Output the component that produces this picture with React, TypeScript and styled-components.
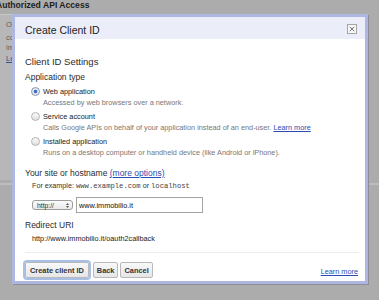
import React from "react";
import styled, { createGlobalStyle } from "styled-components";

const GlobalStyle = createGlobalStyle`
  body {
    margin: 0;
    background: #acacac;
    font-family: "Liberation Sans", Arial, sans-serif;
  }
`;

const Page = styled.div`
  position: relative;
  width: 379px;
  height: 300px;
  overflow: hidden;
  background: #acacac;
`;

const PageHeading = styled.h2`
  margin: 0 0 0 -4px;
  height: 14px;
  font-size: 8.6px;
  line-height: 11px;
  font-weight: bold;
  color: #1e1e1e;
  white-space: nowrap;
`;

const BackPanel = styled.div`
  width: 270px;
  height: 166px;
  box-sizing: border-box;
  padding: 5px 0 0 6px;
  background: #b7b7b7;
  border-top: 1px solid #c6c6c6;
  border-right: 1px solid #c6c6c6;
`;

const BackLine = styled.div<{ $link?: boolean; $gap?: number }>`
  font-size: 7.6px;
  line-height: 10.5px;
  margin-top: ${p => p.$gap ?? 0}px;
  color: ${p => (p.$link ? "#3b4f8c" : "#5c5c5c")};
  text-decoration: ${p => (p.$link ? "underline" : "none")};
  white-space: nowrap;
`;

const BackRule = styled.div`
  margin-top: 3px;
  height: 2px;
  background: #bdbdbd;
`;

const Dialog = styled.div`
  position: absolute;
  left: 12px;
  top: 14px;
  width: 356px;
  height: 270px;
  box-sizing: border-box;
  border: 3px solid #aeb7e1;
  box-shadow: 1px 1px 0 #8c8c98;
  background: #fff;
  display: flex;
  flex-direction: column;
`;

const TitleBar = styled.div`
  height: 21px;
  display: flex;
  align-items: center;
  justify-content: space-between;
  padding: 1px 8px 0 10px;
  background: #ebeef8;
`;

const Title = styled.div`
  font-size: 10.5px;
  color: #222;
  margin-top: 2px;
`;

const CloseBox = styled.div`
  width: 8px;
  height: 8px;
  border: 1px solid #a6a6a6;
  background: #f6f6f6;
  display: flex;
  align-items: center;
  justify-content: center;
`;

const Body = styled.div`
  flex: 1;
  display: flex;
  flex-direction: column;
  padding: 17px 6px 0 10px;
`;

const SectionTitle = styled.div`
  font-size: 9.5px;
  line-height: 12px;
  color: #2a2a2a;
`;

const Label = styled.div<{ $gap: number }>`
  font-size: 8.5px;
  line-height: 11px;
  color: #2a2a2a;
  margin-top: ${p => p.$gap}px;
  white-space: nowrap;
`;

const Options = styled.div`
  display: flex;
  flex-direction: column;
  gap: 3px;
  margin-top: 3px;
`;

const Option = styled.div`
  display: grid;
  grid-template-columns: 9px 1fr;
  column-gap: 3px;
  padding-left: 6px;
  align-items: center;
`;

const Radio = styled.span<{ $checked?: boolean }>`
  width: 9px;
  height: 9px;
  box-sizing: border-box;
  border-radius: 50%;
  border: 1px solid ${p => (p.$checked ? "#8d96a8" : "#b3b3b3")};
  background: ${p =>
    p.$checked
      ? "radial-gradient(circle, #2f62c0 0, #4a7ad0 1.6px, #e6ecf6 2.2px, #d9dfe9 100%)"
      : "linear-gradient(#fdfdfd, #dedede)"};
`;

const OptionName = styled.div`
  font-size: 7.3px;
  line-height: 11px;
  color: #222;
  white-space: nowrap;
`;

const OptionDesc = styled.div`
  grid-column: 2;
  font-size: 7.3px;
  line-height: 11px;
  color: #777;
  white-space: nowrap;
`;

const Link = styled.a`
  color: #2a4bb0;
  text-decoration: underline;
`;

const Example = styled.div`
  margin-top: 1px;
  padding-left: 7px;
  font-size: 7.2px;
  line-height: 11px;
  color: #333;
  white-space: nowrap;
`;

const Mono = styled.span`
  font-family: "Liberation Mono", "Courier New", monospace;
  color: #444;
`;

const HostRow = styled.div`
  margin-top: 5px;
  padding-left: 7px;
  display: flex;
  align-items: center;
  gap: 3px;
`;

const SelectBox = styled.div`
  width: 41px;
  height: 10px;
  box-sizing: border-box;
  border: 1px solid #9c9c9c;
  border-radius: 3px;
  background: linear-gradient(#fbfbfb, #e9e9e9);
  display: flex;
  align-items: center;
  justify-content: space-between;
  padding: 0 3px 0 4px;
  font-size: 6.8px;
  color: #333;
`;

const HostInput = styled.div`
  width: 127px;
  height: 16px;
  box-sizing: border-box;
  border: 1px solid #a3a3a3;
  padding-left: 2px;
  display: flex;
  align-items: center;
  font-size: 7.3px;
  color: #111;
`;

const UriText = styled.div`
  margin-top: 2px;
  padding-left: 7px;
  font-size: 7.3px;
  line-height: 11px;
  color: #222;
`;

const Separator = styled.div`
  margin-top: 8px;
  height: 1px;
  background: #ececec;
`;

const Footer = styled.div`
  margin-top: 9px;
  display: flex;
  align-items: center;
  gap: 2px;
`;

const Button = styled.button<{ $primary?: boolean }>`
  height: 16px;
  box-sizing: border-box;
  padding: 0 ${p => (p.$primary ? 4 : 3)}px;
  margin: 0;
  border: 1px solid #b9b9b9;
  border-radius: 2px;
  background: linear-gradient(#f8f8f8, #e6e6e6);
  font-family: "Liberation Sans", Arial, sans-serif;
  font-size: 7.4px;
  font-weight: bold;
  color: #333;
  box-shadow: ${p => (p.$primary ? "0 0 0 2px #a8c0e8" : "none")};
  margin-right: ${p => (p.$primary ? 2 : 0)}px;
`;

const FooterLink = styled(Link)`
  margin-left: auto;
  margin-top: 2px;
  margin-right: 1px;
  font-size: 7.3px;
`;

const SelectArrows = () => (
  <svg width="3" height="7" viewBox="0 0 3 7">
    <path d="M0 3 L1.5 1 L3 3 Z M0 4 L1.5 6 L3 4 Z" fill="#555" />
  </svg>
);

const CloseIcon = () => (
  <svg width="6" height="6" viewBox="0 0 6 6">
    <path d="M0.8 0.8 L5.2 5.2 M5.2 0.8 L0.8 5.2" stroke="#777" strokeWidth="1" />
  </svg>
);

export default function App() {
  return (
    <Page>
      <GlobalStyle />
      <PageHeading>Authorized API Access</PageHeading>
      <BackPanel>
        <BackLine>O</BackLine>
        <BackLine $gap={2}>co</BackLine>
        <BackLine>im</BackLine>
        <BackLine $link>Le</BackLine>
      </BackPanel>
      <BackRule />

      <Dialog>
        <TitleBar>
          <Title>Create Client ID</Title>
          <CloseBox>
            <CloseIcon />
          </CloseBox>
        </TitleBar>
        <Body>
          <SectionTitle>Client ID Settings</SectionTitle>
          <Label $gap={4}>Application type</Label>
          <Options>
            <Option>
              <Radio $checked />
              <OptionName>Web application</OptionName>
              <OptionDesc>Accessed by web browsers over a network.</OptionDesc>
            </Option>
            <Option>
              <Radio />
              <OptionName>Service account</OptionName>
              <OptionDesc>
                Calls Google APIs on behalf of your application instead of an end-user.{" "}
                <Link>Learn more</Link>
              </OptionDesc>
            </Option>
            <Option>
              <Radio />
              <OptionName>Installed application</OptionName>
              <OptionDesc>
                Runs on a desktop computer or handheld device (like Android or iPhone).
              </OptionDesc>
            </Option>
          </Options>

          <Label $gap={10}>
            Your site or hostname <Link>(more options)</Link>
          </Label>
          <Example>
            For example: <Mono>www.example.com</Mono> or <Mono>localhost</Mono>
          </Example>
          <HostRow>
            <SelectBox>
              <span>http://</span>
              <SelectArrows />
            </SelectBox>
            <HostInput>www.immobilio.it</HostInput>
          </HostRow>

          <Label $gap={7}>Redirect URI</Label>
          <UriText>http://www.immobilio.it/oauth2callback</UriText>
          <Separator />
          <Footer>
            <Button $primary>Create client ID</Button>
            <Button>Back</Button>
            <Button>Cancel</Button>
            <FooterLink>Learn more</FooterLink>
          </Footer>
        </Body>
      </Dialog>
    </Page>
  );
}
